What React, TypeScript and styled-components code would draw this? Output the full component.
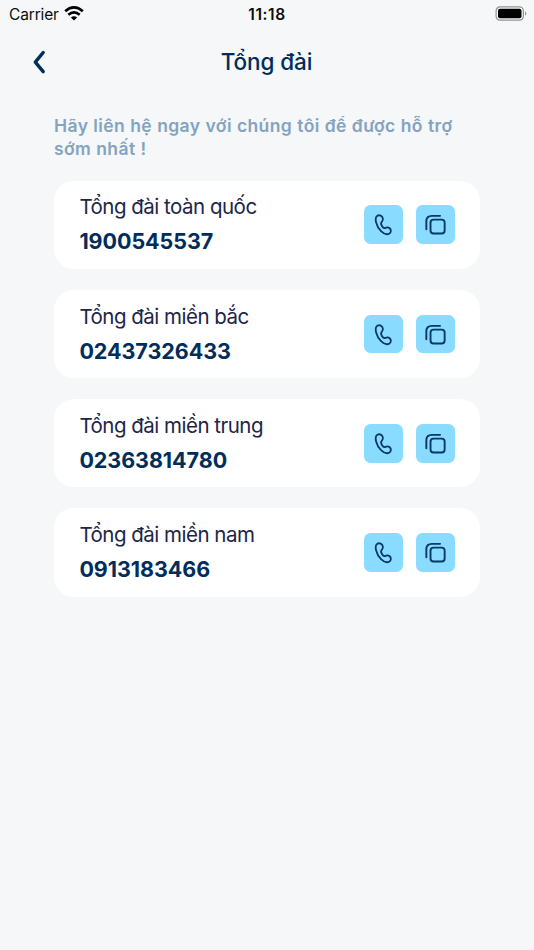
import React from "react";
import styled, { createGlobalStyle } from "styled-components";

const GlobalStyle = createGlobalStyle`
  * { box-sizing: border-box; }
  body { margin: 0; background: #f5f7f9; font-family: Inter, "Noto Sans", sans-serif; }
  button { font: inherit; }
`;

const Screen = styled.div`
  min-height: 950px;
  background: #f5f7f9;
  color: #002d5b;
`;

const StatusBar = styled.div`
  display: grid;
  grid-template-columns: 1fr auto 1fr;
  align-items: center;
  height: 28px;
  padding: 0 7px 0 9px;
  color: #0c0c0c;
`;

const Carrier = styled.div`
  display: flex;
  align-items: center;
  gap: 5px;
  font-size: 15.5px;
  letter-spacing: -0.15px;

  svg {
    margin-bottom: 2px;
  }
`;

const Clock = styled.div`
  margin-right: 2px;
  font-size: 15.5px;
  font-weight: 600;
  letter-spacing: 0.6px;
`;

const Battery = styled.div`
  display: flex;
  justify-content: flex-end;
  padding-bottom: 2px;
`;

const Header = styled.header`
  display: grid;
  grid-template-columns: 54px 1fr 54px;
  align-items: center;
  height: 68px;
`;

const BackButton = styled.button`
  display: flex;
  justify-content: flex-start;
  padding: 0 0 0 29px;
  border: 0;
  background: none;
  color: #002d5b;
`;

const Title = styled.h1`
  margin: 0 1px 0 0;
  font-size: 22.5px;
  font-weight: 500;
  line-height: 30px;
  letter-spacing: -0.1px;
  text-align: center;
`;

const Content = styled.main`
  padding: 17.5px 54px 0;
`;

const Intro = styled.p`
  margin: 0 0 21.2px;
  color: #84a3c1;
  font-size: 17.5px;
  font-weight: 600;
  line-height: 23px;
  letter-spacing: 0.41px;
  word-spacing: 0.2px;
`;

const List = styled.div`
  display: flex;
  flex-direction: column;
  gap: 20.8px;
`;

const Card = styled.section`
  display: flex;
  align-items: center;
  justify-content: space-between;
  height: 88.4px;
  padding: 0 25.5px 0 25.4px;
  border-radius: 20px;
  background: #fff;
`;

const Label = styled.div`
  color: #1d2547;
  font-size: 20.5px;
  line-height: 30px;
  letter-spacing: -0.5px;
  white-space: nowrap;
`;

const PhoneNumber = styled.div`
  margin-top: 4px;
  font-size: 21.5px;
  font-weight: 700;
  line-height: 31px;
  letter-spacing: -0.05px;
  white-space: nowrap;
`;

const Actions = styled.div`
  display: flex;
  gap: 13px;
`;

const ActionButton = styled.button`
  display: flex;
  width: 38.8px;
  height: 38.8px;
  padding: 0;
  border: 0;
  border-radius: 6.5px;
  background: #89dcff;
  color: #073866;
`;

const WifiIcon = () => (
  <svg width="20" height="15" viewBox="0 0 20 15" fill="none" stroke="#000" strokeWidth="2.7">
    <path d="M1.2 5.2Q10 -2.4 18.8 5.2" />
    <path d="M4.3 8.7Q10 3.9 15.7 8.7" />
    <path d="M10 14.5L6.9 11.5Q10 8.9 13.1 11.5Z" fill="#000" stroke="none" />
  </svg>
);

const BatteryIcon = () => (
  <svg width="32" height="15" viewBox="0 0 32 15">
    <rect x="1.1" y="0.8" width="27.3" height="13.4" rx="4" fill="none" stroke="#929395" strokeWidth="1.2" />
    <rect x="3" y="2.7" width="23.5" height="9.6" rx="2" fill="#000" />
    <path d="M30 5.2Q32.6 7.5 30 9.8Z" fill="#929395" />
  </svg>
);

const BackIcon = () => (
  <svg width="18" height="26" viewBox="0 0 18 26" fill="none" stroke="currentColor" strokeWidth="3.4" strokeLinecap="round" strokeLinejoin="round">
    <path d="M14.2 3.5L6.3 13.1L14.2 22.7" />
  </svg>
);

const PhoneIcon = () => (
  <svg width="39" height="39" viewBox="0 0 39 39" fill="none" stroke="currentColor" strokeWidth="1.8" strokeLinejoin="round">
    <path d="M13.4 10.8C15.6 9.4 18.3 10.7 18.9 13.1C19.3 14.8 19 15.7 18 16.7C16.8 17.9 16.9 19.3 18 21C19.1 22.8 20.2 23.6 21.5 22.9C23.2 22 24.4 22 25.8 23.3C27.5 24.9 27.4 27.2 25.6 28.5C23.3 30 20.2 29.2 17.4 26.5C14.9 24.1 12.9 20.5 12.1 17.2C11.4 14.1 11.5 12 13.4 10.8Z" />
  </svg>
);

const CopyIcon = () => (
  <svg width="39" height="39" viewBox="0 0 39 39" fill="none" stroke="currentColor" strokeWidth="1.9" strokeLinecap="round">
    <rect x="14.6" y="14.6" width="14.2" height="14" rx="3" />
    <path d="M10.4 24.3V16.3Q10.4 10.8 15.9 10.8H24.2" />
  </svg>
);

const hotlines = [
  { label: "Tổng đài toàn quốc", number: "1900545537" },
  { label: "Tổng đài miền bắc", number: "02437326433" },
  { label: "Tổng đài miền trung", number: "02363814780" },
  { label: "Tổng đài miền nam", number: "0913183466" },
];

export default function App() {
  return (
    <Screen>
      <GlobalStyle />
      <StatusBar>
        <Carrier>Carrier <WifiIcon /></Carrier>
        <Clock>11:18</Clock>
        <Battery><BatteryIcon /></Battery>
      </StatusBar>
      <Header>
        <BackButton aria-label="Quay lại"><BackIcon /></BackButton>
        <Title>Tổng đài</Title>
      </Header>
      <Content>
        <Intro>Hãy liên hệ ngay với chúng tôi để được hỗ trợ sớm nhất !</Intro>
        <List>
          {hotlines.map(({ label, number }) => (
            <Card key={number}>
              <div>
                <Label>{label}</Label>
                <PhoneNumber>{number}</PhoneNumber>
              </div>
              <Actions>
                <ActionButton aria-label={`Gọi ${number}`}><PhoneIcon /></ActionButton>
                <ActionButton aria-label={`Sao chép ${number}`}><CopyIcon /></ActionButton>
              </Actions>
            </Card>
          ))}
        </List>
      </Content>
    </Screen>
  );
}
